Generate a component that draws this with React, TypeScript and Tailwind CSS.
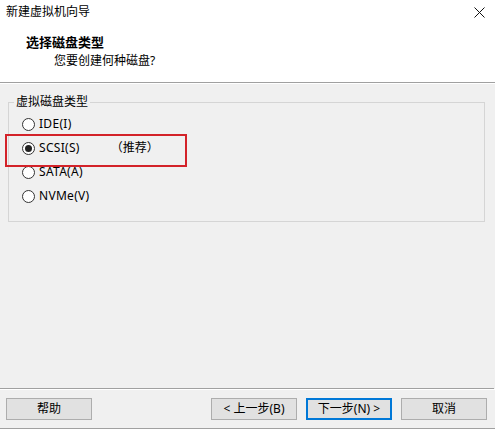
import React from "react";

function Radio({ checked, label, extra }: { checked?: boolean; label: string; extra?: string }) {
  return (
    <div className="h-[24px] flex items-center">
      <div className="ml-[13px] w-[13px] h-[13px] rounded-full border border-[#333333] bg-white flex items-center justify-center">
        {checked && <div className="w-[7px] h-[7px] rounded-full bg-[#222222]" />}
      </div>
      <span className="ml-[4px] text-[12px] leading-[16px] tracking-[0.3px] text-black">{label}</span>
      {extra && <span className="ml-[31px] text-[12px] leading-[16px] text-black">{extra}</span>}
    </div>
  );
}

function Btn({ children, primary }: { children: React.ReactNode; primary?: boolean }) {
  return (
    <div
      className={
        "w-[86px] h-[22px] flex items-center justify-center bg-[#e1e1e1] text-[12px] leading-[16px] text-black " +
        (primary ? "border-2 border-[#0078d7]" : "border border-[#adadad]")
      }
    >
      {children}
    </div>
  );
}

export default function App() {
  return (
    <div className="w-[495px] h-[429px] bg-[#f0f0f0] flex flex-col font-['Noto_Sans','Noto_Sans_CJK_SC',sans-serif] text-black">
      <div className="h-[82px] bg-white flex flex-col">
        <div className="h-[24px] flex items-center justify-between pl-[6px] pr-[10px]">
          <span className="text-[12px] leading-[16px]">新建虚拟机向导</span>
          <svg width="11" height="11" viewBox="0 0 11 11">
            <path d="M0.5 0.5 L10.5 10.5 M10.5 0.5 L0.5 10.5" stroke="#111" strokeWidth="1" />
          </svg>
        </div>
        <div className="pl-[26px] mt-[10px] text-[13px] leading-[16px] font-bold">选择磁盘类型</div>
        <div className="pl-[54px] mt-[3px] text-[12px] leading-[16px]">您要创建何种磁盘?</div>
      </div>
      <div className="h-px bg-[#a0a0a0]" />
      <div className="h-px bg-white" />
      <div className="flex-1 px-[8px] pt-[18px] pr-[10px]">
        <div className="relative border border-[#d5d5d5] h-[120px] pt-[9px]">
          <span className="absolute left-[5px] top-[-9px] px-[2px] bg-[#f0f0f0] text-[12px] leading-[16px]">虚拟磁盘类型</span>
          <Radio label="IDE(I)" />
          <Radio checked label="SCSI(S)" extra="（推荐）" />
          <Radio label="SATA(A)" />
          <Radio label="NVMe(V)" />
          <div className="absolute left-[-4px] top-[31px] w-[182px] h-[33px] border-2 border-[#d32229]" />
        </div>
      </div>
      <div className="h-px bg-[#a0a0a0] mr-[1px]" />
      <div className="h-px bg-white" />
      <div className="h-[38px] flex items-center justify-between pl-[6px] pr-[8px]">
        <Btn>帮助</Btn>
        <div className="flex gap-[9px]">
          <Btn>&lt; 上一步(B)</Btn>
          <Btn primary>下一步(N) &gt;</Btn>
          <Btn>取消</Btn>
        </div>
      </div>
      <div className="h-px bg-[#a0a0a0]" />
    </div>
  );
}
